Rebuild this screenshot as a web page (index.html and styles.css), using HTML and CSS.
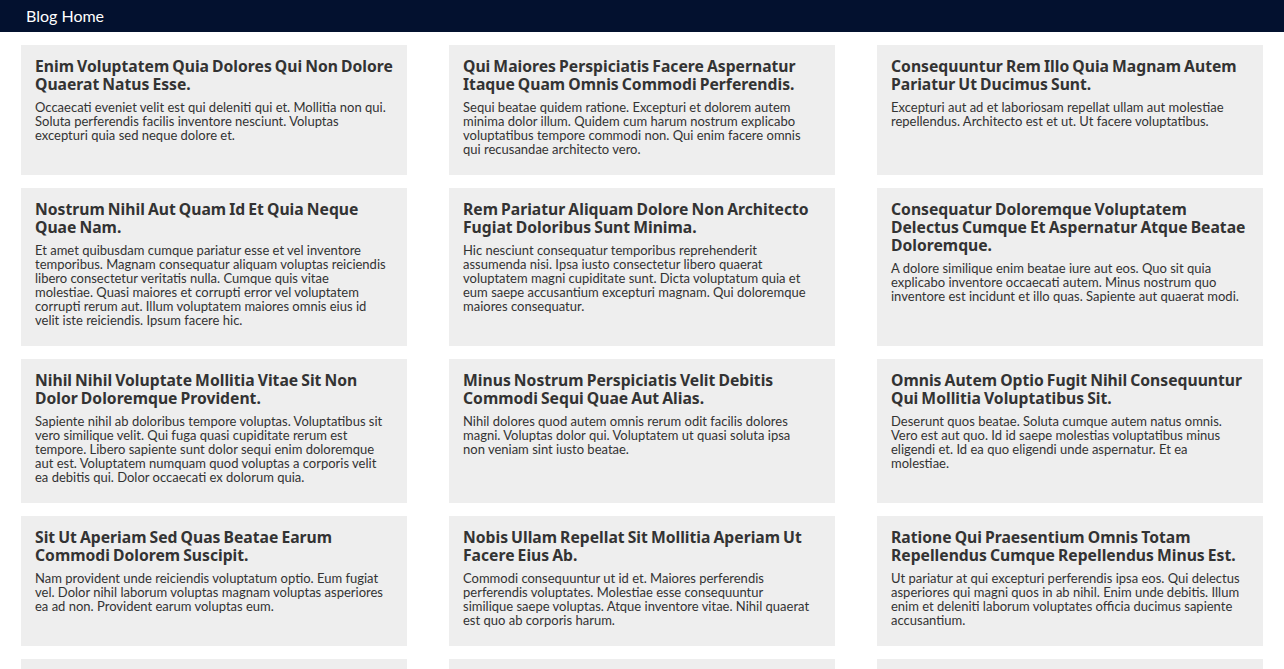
FILE: index.html
```html
<!DOCTYPE html>
<html lang="en">
<head>
<meta charset="utf-8">
<title>Blog Home</title>
<link rel="stylesheet" href="styles.css">
</head>
<body>
<header class="topbar"><span class="brand">Blog Home</span></header>
<main class="posts">
  <article class="post"><h2 class="post-title">Enim Voluptatem Quia Dolores Qui Non Dolore Quaerat Natus Esse.</h2><p class="post-body">Occaecati eveniet velit est qui deleniti qui et. Mollitia non qui. Soluta perferendis facilis inventore nesciunt. Voluptas excepturi quia sed neque dolore et.</p></article>
  <article class="post"><h2 class="post-title">Qui Maiores Perspiciatis Facere Aspernatur Itaque Quam Omnis Commodi Perferendis.</h2><p class="post-body">Sequi beatae quidem ratione. Excepturi et dolorem autem minima dolor illum. Quidem cum harum nostrum explicabo voluptatibus tempore commodi non. Qui enim facere omnis qui recusandae architecto vero.</p></article>
  <article class="post"><h2 class="post-title">Consequuntur Rem Illo Quia Magnam Autem Pariatur Ut Ducimus Sunt.</h2><p class="post-body">Excepturi aut ad et laboriosam repellat ullam aut molestiae repellendus. Architecto est et ut. Ut facere voluptatibus.</p></article>

  <article class="post"><h2 class="post-title">Nostrum Nihil Aut Quam Id Et Quia Neque Quae Nam.</h2><p class="post-body">Et amet quibusdam cumque pariatur esse et vel inventore temporibus. Magnam consequatur aliquam voluptas reiciendis libero consectetur veritatis nulla. Cumque quis vitae molestiae. Quasi maiores et corrupti error vel voluptatem corrupti rerum aut. Illum voluptatem maiores omnis eius id velit iste reiciendis. Ipsum facere hic.</p></article>
  <article class="post"><h2 class="post-title">Rem Pariatur Aliquam Dolore Non Architecto Fugiat Doloribus Sunt Minima.</h2><p class="post-body">Hic nesciunt consequatur temporibus reprehenderit assumenda nisi. Ipsa iusto consectetur libero quaerat voluptatem magni cupiditate sunt. Dicta voluptatum quia et eum saepe accusantium excepturi magnam. Qui doloremque maiores consequatur.</p></article>
  <article class="post"><h2 class="post-title">Consequatur Doloremque Voluptatem Delectus Cumque Et Aspernatur Atque Beatae Doloremque.</h2><p class="post-body">A dolore similique enim beatae iure aut eos. Quo sit quia explicabo inventore occaecati autem. Minus nostrum quo inventore est incidunt et illo quas. Sapiente aut quaerat modi.</p></article>

  <article class="post"><h2 class="post-title">Nihil Nihil Voluptate Mollitia Vitae Sit Non Dolor Doloremque Provident.</h2><p class="post-body">Sapiente nihil ab doloribus tempore voluptas. Voluptatibus sit vero similique velit. Qui fuga quasi cupiditate rerum est tempore. Libero sapiente sunt dolor sequi enim doloremque aut est. Voluptatem numquam quod voluptas a corporis velit ea debitis qui. Dolor occaecati ex dolorum quia.</p></article>
  <article class="post"><h2 class="post-title">Minus Nostrum Perspiciatis Velit Debitis Commodi Sequi Quae Aut Alias.</h2><p class="post-body">Nihil dolores quod autem omnis rerum odit facilis dolores magni. Voluptas dolor qui. Voluptatem ut quasi soluta ipsa non veniam sint iusto beatae.</p></article>
  <article class="post"><h2 class="post-title">Omnis Autem Optio Fugit Nihil Consequuntur Qui Mollitia Voluptatibus Sit.</h2><p class="post-body">Deserunt quos beatae. Soluta cumque autem natus omnis. Vero est aut quo. Id id saepe molestias voluptatibus minus eligendi et. Id ea quo eligendi unde aspernatur. Et ea molestiae.</p></article>

  <article class="post"><h2 class="post-title">Sit Ut Aperiam Sed Quas Beatae Earum Commodi Dolorem Suscipit.</h2><p class="post-body">Nam provident unde reiciendis voluptatum optio. Eum fugiat vel. Dolor nihil laborum voluptas magnam voluptas asperiores ea ad non. Provident earum voluptas eum.</p></article>
  <article class="post"><h2 class="post-title">Nobis Ullam Repellat Sit Mollitia Aperiam Ut Facere Eius Ab.</h2><p class="post-body">Commodi consequuntur ut id et. Maiores perferendis perferendis voluptates. Molestiae esse consequuntur similique saepe voluptas. Atque inventore vitae. Nihil quaerat est quo ab corporis harum.</p></article>
  <article class="post"><h2 class="post-title">Ratione Qui Praesentium Omnis Totam Repellendus Cumque Repellendus Minus Est.</h2><p class="post-body">Ut pariatur at qui excepturi perferendis ipsa eos. Qui delectus asperiores qui magni quos in ab nihil. Enim unde debitis. Illum enim et deleniti laborum voluptates officia ducimus sapiente accusantium.</p></article>

  <article class="post post-partial"></article>
  <article class="post post-partial"></article>
  <article class="post post-partial"></article>
</main>
</body>
</html>
```
FILE: styles.css
```css
* { box-sizing: border-box; }

html, body {
  margin: 0;
  padding: 0;
  background: #ffffff;
}

body {
  font-family: "Lato", "Noto Sans", sans-serif;
  color: #333333;
}

.topbar {
  height: 32px;
  background: #03112f;
  display: flex;
  align-items: center;
  padding: 0 26px;
}

.brand {
  color: #ffffff;
  font-family: "Lato", sans-serif;
  font-size: 16px;
  line-height: 18px;
  padding-bottom: 1px;
}

.posts {
  display: grid;
  grid-template-columns: repeat(3, 1fr);
  column-gap: 42px;
  row-gap: 13px;
  padding: 13px 21px;
}

.post {
  background: #eeeeee;
  padding: 12px 10px 19px 14px;
}

.post-partial {
  height: 10px;
  padding: 0;
}

.post-title {
  margin: 0 0 7px;
  font-family: "Noto Sans", "Open Sans", sans-serif;
  font-size: 15.7px;
  line-height: 18px;
  font-weight: 700;
  word-spacing: -1px;
  color: #333333;
}

.post-body {
  margin: 0 10.75px 0 0;
  font-family: "Lato", "Noto Sans", sans-serif;
  font-size: 13px;
  line-height: 14px;
  color: #333333;
}
```
